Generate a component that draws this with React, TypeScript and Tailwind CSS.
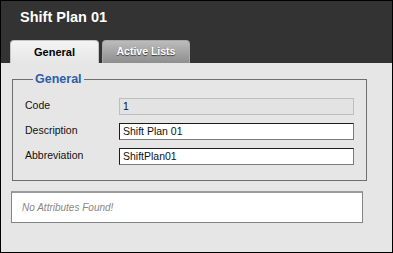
const font = { fontFamily: '"Liberation Sans", Arial, sans-serif' };

function Row({ label, value, disabled }: { label: string; value: string; disabled?: boolean }) {
  return (
    <div className="flex items-center">
      <span className="w-[94px] -mt-[3px] text-[10.5px] leading-3 text-[#111]">{label}</span>
      {disabled ? (
        <div className="flex h-[17px] w-[235px] items-center border border-[#bdbdbd] bg-[#e3e3e3] pl-[3px] text-[10.5px] text-[#111]">
          {value}
        </div>
      ) : (
        <div className="flex h-[17px] w-[235px] items-center border border-t-[#1c1c1c] border-l-[#1c1c1c] border-r-[#7a7a7a] border-b-[#7a7a7a] bg-white pl-[3px] text-[10.5px] text-[#111]">
          {value}
        </div>
      )}
    </div>
  );
}

export default function App() {
  return (
    <div style={font} className="flex h-[253px] w-[393px] flex-col border border-black bg-[#e6e6e6]">
      {/* header with title and tabs */}
      <div className="flex h-[62px] flex-col bg-[#333333]">
        <h1 className="pl-[19px] pt-[8px] text-[14.5px] font-bold leading-4 text-white">Shift Plan 01</h1>
        <div className="mt-auto flex items-end gap-[3px] pl-[9px]">
          <div className="flex h-[23px] w-[89px] items-center justify-center rounded-t-[4px] border border-b-0 border-[#c4c4c4] bg-gradient-to-b from-[#f4f4f4] to-[#e6e6e6] text-[11px] font-bold text-black">
            General
          </div>
          <div className="flex h-[23px] w-[88px] items-center justify-center rounded-t-[4px] border border-b-0 border-[#a8a8a8] bg-gradient-to-b from-[#bcbcbc] to-[#8e8e8e] text-[10.5px] font-bold text-white [text-shadow:0_1px_1px_#3a3a3a]">
            Active Lists
          </div>
        </div>
      </div>

      {/* general fieldset */}
      <fieldset className="ml-[11px] mt-[9px] w-[355px] border border-[#6f6f6f] px-[12px] pb-[15px]">
        <legend className="ml-[8px] px-[2px] text-[12.5px] font-bold leading-[14px] text-[#2d5ea8]">General</legend>
        <div className="mt-[12px] flex flex-col gap-[8px]">
          <Row label="Code" value="1" disabled />
          <Row label="Description" value="Shift Plan 01" />
          <Row label="Abbreviation" value="ShiftPlan01" />
        </div>
      </fieldset>

      {/* attributes */}
      <div className="ml-[10px] mt-[10px] flex h-[32px] w-[352px] items-center border border-[#858585] border-t-2 border-t-[#9c9c9c] bg-white pl-[10px] text-[10px] italic text-[#8a867f]">
        No Attributes Found!
      </div>
    </div>
  );
}
